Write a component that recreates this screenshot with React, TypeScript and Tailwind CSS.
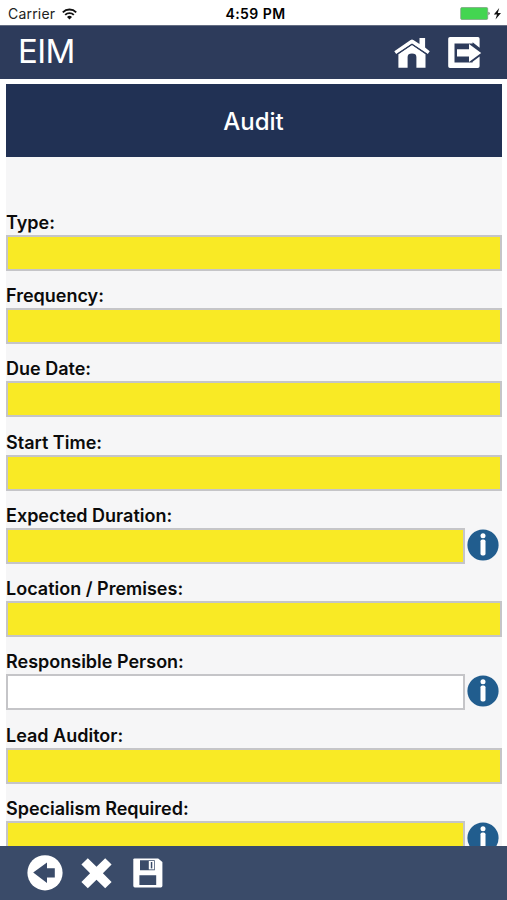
import React from "react";

type Field = {
  label: string;
  info?: boolean;
  optional?: boolean;
};

const fields: Field[] = [
  { label: "Type:" },
  { label: "Frequency:" },
  { label: "Due Date:" },
  { label: "Start Time:" },
  { label: "Expected Duration:", info: true },
  { label: "Location / Premises:" },
  { label: "Responsible Person:", info: true, optional: true },
  { label: "Lead Auditor:" },
  { label: "Specialism Required:", info: true },
];

// ==========================================
// Status bar
// ==========================================
function StatusBar() {
  return (
    <div className="grid h-[25px] shrink-0 grid-cols-3 items-center bg-white pt-[2px] pr-[5px] pl-[8px] text-black">
      <div className="flex items-center gap-[7px]">
        <span className="text-[14px] leading-none tracking-[0.2px] text-[#222]">Carrier</span>
        <svg width="15" height="12" viewBox="0 0 15 12" fill="none" stroke="#111" strokeWidth="1.9">
          <path d="M0.8 4.3a9.5 9.5 0 0 1 13.4 0" />
          <path d="M3.2 6.9a6.1 6.1 0 0 1 8.6 0" />
          <path d="M7.5 11.6 5 9.1a3.5 3.5 0 0 1 5 0z" fill="#111" stroke="none" />
        </svg>
      </div>
      <span className="pl-[1px] text-center text-[14px] leading-none font-semibold tracking-[0.45px]">4:59 PM</span>
      <div className="flex items-center justify-end">
        <svg width="42" height="14" viewBox="0 0 42 14">
          <rect x="0.7" y="0.5" width="27" height="12" rx="1.2" fill="#43d551" stroke="#7b9b80" strokeWidth="0.7" />
          <path d="M28.6 4.8q1.9 1.7 0 3.5z" fill="#222" />
          <path d="M39.2 1 33.8 7.5h3.2l-1.5 5 5.5-6.5h-3.2z" fill="#111" />
        </svg>
      </div>
    </div>
  );
}

// ==========================================
// Header
// ==========================================
function Header() {
  return (
    <header className="flex h-[54px] shrink-0 items-center justify-between border-t border-[#646d82] bg-[#2d3b5b] pr-[25px] pl-[18px]">
      <h1 className="pb-[2px] text-[33px] leading-none tracking-[-0.6px] text-white">EIM</h1>
      <div className="flex items-center gap-[17px]">
        <svg width="36" height="32" viewBox="0 0 36 32" fill="#fff">
          <path d="M25.5 1h5.6v9.4l4.6 3.9-1.9 2.7L18 6.6 2.2 17 .3 14.3 16.6 3q1.4-.9 2.8 0l6.1 4.1z" />
          <path d="M4.4 17.2 18 8l13.5 9.2v13.5h-9.1V20q0-3.4-4.4-3.4T13.6 20v10.7H4.4z" />
          <path d="M2.6 17.6 18 7.3l15.4 10.3" fill="none" stroke="#2d3b5b" strokeWidth="1" />
        </svg>
        <svg width="35" height="34" viewBox="0 0 35 34">
          <path
            d="M3 1h28q1.6 0 1.6 1.8v9l-7-5.6v1.4H7.5v19h18.1v-.8l7-5.2v9.6q0 1.8-1.8 1.8H3q-1.8 0-1.8-1.8V2.8Q1.2 1 3 1z"
            fill="#fff"
          />
          <path d="M10 13.3h12V7.9L34.2 17 22 26v-5.5H10z" fill="#fff" />
        </svg>
      </div>
    </header>
  );
}

// ==========================================
// Form
// ==========================================
function InfoIcon() {
  return (
    <svg className="mt-[1px] ml-[2px] shrink-0" width="32" height="32" viewBox="0 0 32 32">
      <circle cx="16" cy="16" r="15.6" fill="#215d8e" />
      <circle cx="16" cy="6.8" r="2.5" fill="#fff" />
      <rect x="13.5" y="10.5" width="5" height="16" rx="1.8" fill="#fff" />
    </svg>
  );
}

function FormField({ label, info, optional }: Field) {
  return (
    <div className="h-[73.25px] shrink-0">
      <label className="block h-[25px] pt-[1px] pl-[0.5px] text-[18px] leading-[23px] font-semibold text-[#0b0b0b]">
        {label}
      </label>
      <div className="flex">
        <div className={`h-9 flex-1 border-[2.5px] border-[#c5c5c8] ${optional ? "bg-white" : "bg-[#f9ea25]"}`} />
        {info && (
          <div className="h-9 w-[37px]">
            <InfoIcon />
          </div>
        )}
      </div>
    </div>
  );
}

// ==========================================
// Footer toolbar
// ==========================================
function Toolbar() {
  return (
    <footer className="flex h-[54px] shrink-0 items-center bg-[#3a4b69] pl-[27px]">
      <svg width="36" height="36" viewBox="0 0 36 36">
        <circle cx="18" cy="17.8" r="17.6" fill="#fff" />
        <path d="M6.2 17.6 20 7.5v5.8h7.8v9.3H20v5.5z" fill="#3a4b69" />
      </svg>
      <svg className="ml-[18px]" width="31" height="31" viewBox="0 0 31 31" fill="#fff">
        <path d="M6.8.3 15.5 8.7 24.2.3l6.4 6.2-8.7 8.7 8.7 8.7-6.4 6.3-8.7-8.4-8.7 8.4-6.4-6.3 8.7-8.7L.4 6.5z" />
      </svg>
      <svg className="ml-[21px]" width="30" height="30" viewBox="0 0 30 30">
        <path d="M1.5.4h23.7L29.4 4v23.8q0 1.6-1.6 1.6H1.8Q.3 29.4.3 27.8V1.6Q.3.4 1.5.4z" fill="#fff" />
        <path d="M7 2.3h14.8v10H7zM6.4 17.2h16.8V27H6.4z" fill="#3a4b69" />
        <rect x="15.8" y="3" width="5.3" height="8.4" fill="#fff" />
        <rect x="17.8" y="4" width="1.5" height="6.4" fill="#3a4b69" />
      </svg>
    </footer>
  );
}

export default function App() {
  return (
    <div className="flex h-screen w-full flex-col overflow-hidden bg-white font-['Inter','Liberation_Sans',sans-serif]">
      <StatusBar />
      <Header />
      <main className="min-h-0 flex-1 overflow-hidden px-[5.5px] pt-[5px]">
        <div className="flex flex-col bg-[#f6f6f7]">
          <h2 className="flex h-[73px] shrink-0 items-center justify-center bg-[#213154] pt-[2px] text-[24px] leading-none font-medium text-white">
            Audit
          </h2>
          <form className="flex flex-col pt-[52.75px]">
            {fields.map((field) => (
              <FormField key={field.label} {...field} />
            ))}
          </form>
        </div>
      </main>
      <Toolbar />
    </div>
  );
}
